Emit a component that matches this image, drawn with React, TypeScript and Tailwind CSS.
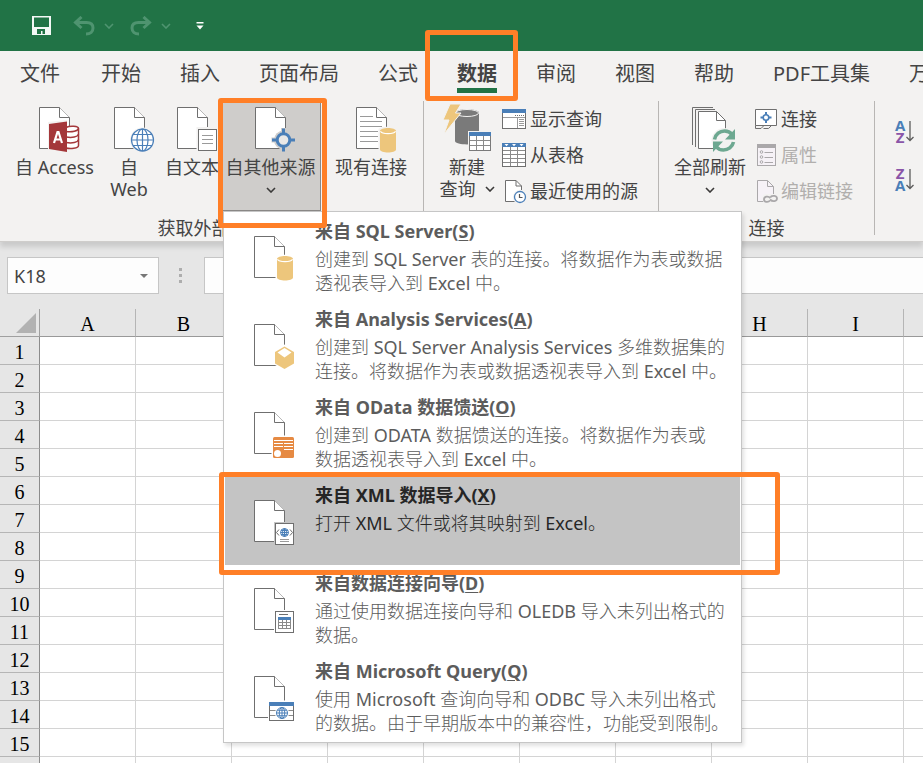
import { ReactNode } from "react";

const PAGE = "M.5 .5H20.5L30.5 10.5V41.5H.5Z";
const FOLD = "M20.5 .5V10.5H30.5";

function PageIcon({ children, lines = false }: { children?: ReactNode; lines?: boolean }) {
  return (
    <svg width="31" height="46" viewBox="0 0 31 46" className="shrink-0 overflow-visible" aria-hidden="true">
      <path d={PAGE} fill="#fff" stroke="#6f6f6f" />
      <path d={FOLD} fill="#fff" stroke="#6f6f6f" />
      {lines && <path d="M4 9.5H17M4 14.5H26M4 19.5H26M4 24.5H22M4 29.5H22M4 34.5H22" stroke="#9a9a9a" />}
      {children}
    </svg>
  );
}

function AccessBadge() {
  return (
    <>
      <path d="M9 15L28 13V19H42V43H28V47L9 44Z" fill="#f3f2f1" />
      <path d="M27 20.5C31 18.5 39.500 19 39.500 21.500V38.500C39.500 41.500 31 42 27 41" fill="#fff" stroke="#a4373a" strokeWidth="1.500" />
      <path d="M27 24.500C33 25.500 39 24 39.500 21.500M27 30C33 31 39 30 39.500 27M27 35.500C33 36.500 39 35.500 39.500 32.500" fill="none" stroke="#a4373a" strokeWidth="1.500" />
      <path d="M10 17L28 14.500V45L10 42Z" fill="#a4373a" />
      <path d="M15 36L18.500 25H19.500L23 36M16.500 32.500H21.500" fill="none" stroke="#fff" strokeWidth="2.200" />
    </>
  );
}

function Globe({ cx, cy, r, halo = "#f3f2f1", w = 1.2 }: { cx: number; cy: number; r: number; halo?: string; w?: number }) {
  const h = r * 0.5;
  const c = Math.sqrt(r * r - h * h);
  return (
    <>
      <circle cx={cx} cy={cy} r={r + 1.5} fill={halo} />
      <g fill="none" stroke="#4a7fb8" strokeWidth={w}>
        <circle cx={cx} cy={cy} r={r} fill="#fff" />
        <ellipse cx={cx} cy={cy} rx={r * 0.5} ry={r} />
        <path d={`M${cx - r} ${cy}H${cx + r}M${cx} ${cy - r}V${cy + r}M${cx - c} ${cy - h}H${cx + c}M${cx - c} ${cy + h}H${cx + c}`} />
      </g>
    </>
  );
}

function Cylinder({ x, y, halo }: { x: number; y: number; halo: string }) {
  return (
    <g transform={`translate(${x} ${y})`}>
      <path d="M-1.500 1C1 -2 15 -2 17.500 1V23C15 26.500 1 26.500 -1.500 23Z" fill={halo} />
      <path d="M0 3C0 -1 16 -1 16 3V21.500C16 25.500 0 25.500 0 21.500Z" fill="#edc67c" />
      <path d="M.5 3.200C2 6.400 14 6.400 15.500 3.200" fill="none" stroke="#fff" strokeWidth="1.200" />
    </g>
  );
}

function Chevron({ className = "text-[#3b3a39]" }: { className?: string }) {
  return (
    <svg width="10" height="6" viewBox="0 0 10 6" className={className} aria-hidden="true">
      <path d="M1 1L5 5L9 1" fill="none" stroke="currentColor" strokeWidth="1.600" />
    </svg>
  );
}

function Highlight({ className }: { className: string }) {
  return <span aria-hidden="true" className={`pointer-events-none absolute z-30 rounded-[3px] border-[5px] border-[#ff7f27] ${className}`} />;
}

function BigButton({ icon, lines, className, chevron }: { icon: ReactNode; lines: string[]; className: string; chevron?: "below" | "inline" }) {
  return (
    <button type="button" className={`flex h-[110px] shrink-0 flex-col items-center pt-[6px] text-[18px] leading-[22px] whitespace-nowrap ${className}`}>
      {icon}
      <span className="mt-[3px] flex flex-col items-center">
        {lines.map((line, i) => (
          <span key={line} className="flex items-center gap-[9px]">
            {line}
            {chevron === "inline" && i === lines.length - 1 && <Chevron />}
          </span>
        ))}
      </span>
      {chevron === "below" && (
        <span className="flex h-[24px] items-center">
          <Chevron />
        </span>
      )}
    </button>
  );
}

function SmallButton({ icon, label, disabled }: { icon: ReactNode; label: string; disabled?: boolean }) {
  return (
    <button type="button" disabled={disabled} className="flex h-9 items-center gap-1 text-[18px] leading-[22px] whitespace-nowrap disabled:text-[#b1afad]">
      {icon}
      {label}
    </button>
  );
}

function Group({ label, children, className = "" }: { label?: string; children: ReactNode; className?: string }) {
  return (
    <section className={`flex h-[134px] shrink-0 flex-col border-r border-[#b8b6b4] ${className}`}>
      <div className="flex h-[110px]">{children}</div>
      {label && <h2 className="mt-[6px] text-center text-[18px] leading-[22px]">{label}</h2>}
    </section>
  );
}

const menuItems = [
  {
    title: "来自 SQL Server", accessKey: "S",
    lines: ["创建到 SQL Server 表的连接。将数据作为表或数据", "透视表导入到 Excel 中。"],
    badge: <Cylinder x={23} y={20} halo="#fff" />,
  },
  {
    title: "来自 Analysis Services", accessKey: "A",
    lines: ["创建到 SQL Server Analysis Services 多维数据集的", "连接。将数据作为表或数据透视表导入到 Excel 中。"],
    badge: (
      <>
        <path d="M30.500 20.500L42 27V40L30.500 47L19.500 40V27Z" fill="#fff" />
        <path d="M30.500 22.500L40 28V39.500L30.500 45L21 39.500V28Z" fill="#edc67c" />
        <path d="M30.500 24L37.500 28.500L30.500 33.500L23.500 28.500Z" fill="#fff" />
      </>
    ),
  },
  {
    title: "来自 OData 数据馈送", accessKey: "O",
    lines: ["创建到 ODATA 数据馈送的连接。将数据作为表或", "数据透视表导入到 Excel 中。"],
    badge: (
      <>
        <rect x="17.500" y="23.500" width="24" height="24" fill="#fff" />
        <rect x="19" y="25" width="21" height="21" rx="1.500" fill="#e68a43" />
        <path d="M20 28.500H39M20 31.500H29M30 31.500H39M20 34.500H29M30 34.500H39M30 37.500H39" stroke="#fff" />
        <circle cx="23.500" cy="41.500" r="3.500" fill="#fff" />
      </>
    ),
  },
  {
    title: "来自 XML 数据导入", accessKey: "X", active: true,
    lines: ["打开 XML 文件或将其映射到 Excel。"],
    badge: (
      <>
        <rect x="20" y="22" width="21" height="24" fill="#c4c4c4" />
        <rect x="21.500" y="23.500" width="18" height="21" fill="#fff" stroke="#6f6f6f" />
        <Globe cx={30.5} cy={32.5} r={4} halo="#fff" w={1} />
        <path d="M25 29.500L22.500 32.500L25 35.500M36 29.500L38.500 32.500L36 35.500" fill="none" stroke="#6f6f6f" />
        <path d="M26 39.500H35M26 41.500H35" stroke="#9a9a9a" />
      </>
    ),
  },
  {
    title: "来自数据连接向导", accessKey: "D",
    lines: ["通过使用数据连接向导和 OLEDB 导入未列出格式的", "数据。"],
    badge: (
      <>
        <rect x="20" y="22" width="21" height="24" fill="#fff" />
        <rect x="21.500" y="23.500" width="18" height="21" fill="#fff" stroke="#6f6f6f" />
        <path d="M25 26.500H34" stroke="#6f6f6f" />
        <rect x="24.500" y="29.500" width="12" height="11" fill="none" stroke="#8a8a8a" />
        <path d="M24.500 34.500H36.500M24.500 37.500H36.500M28.500 30V40M32.500 30V40" stroke="#8a8a8a" />
        <rect x="24" y="29" width="13" height="3" fill="#4a7fb8" />
      </>
    ),
  },
  {
    title: "来自 Microsoft Query", accessKey: "Q",
    lines: ["使用 Microsoft 查询向导和 ODBC 导入未列出格式", "的数据。由于早期版本中的兼容性，功能受到限制。"],
    badge: (
      <>
        <rect x="14" y="24.500" width="27" height="22" fill="#fff" />
        <rect x="15.500" y="26.500" width="24" height="18" fill="#fff" stroke="#6f6f6f" />
        <rect x="15" y="26" width="25" height="4" fill="#4a7fb8" />
        <path d="M16 34.500H39M16 39.500H39" stroke="#8a8a8a" />
        <Globe cx={28} cy={37} r={5.5} halo="#fff" w={1} />
      </>
    ),
  },
];

function SourceMenu() {
  return (
    <ul role="menu" className="absolute top-[110px] left-0 z-20 w-[519px] border border-[#c6c6c6] bg-white p-px shadow-[2px_3px_4px_rgba(0,0,0,0.12)]">
      {menuItems.map((item) => (
        <li key={item.accessKey} role="none" className="relative">
          <button
            type="button"
            role="menuitem"
            className={`flex h-[88px] w-full items-start gap-[30px] pl-[29px] text-left text-[18px] leading-6 whitespace-nowrap ${item.active ? "bg-[#c4c4c4] text-[#262626]" : "text-[#5c5c5c]"}`}
          >
            <span className="pt-[23px]">
              <PageIcon>{item.badge}</PageIcon>
            </span>
            <span className="flex flex-col pt-[6px]">
              <span className="font-bold">
                {item.title}(<u className="underline-offset-2">{item.accessKey}</u>)
              </span>
              <span className="mt-1 font-['Noto_Sans','Noto_Sans_CJK_SC_Light','Noto_Sans_CJK_SC',sans-serif]">
                {item.lines.map((line) => (
                  <span key={line} className="block">{line}</span>
                ))}
              </span>
            </span>
          </button>
          {item.active && <Highlight className="-top-[5px] -right-[40px] -bottom-[10px] -left-[6px]" />}
        </li>
      ))}
    </ul>
  );
}

function QuickAccess() {
  return (
    <header className="flex h-[51px] shrink-0 items-center bg-[#217346] pl-8">
      <button type="button" aria-label="保存">
        <svg width="19" height="19" viewBox="0 0 19 19" className="block">
          <path d="M0 0H19V19H0Z" fill="#f3f8f5" />
          <path d="M2 1.500H17V11H2ZM5 13H13V18H10.500V15H9V18H5Z" fill="#217346" />
        </svg>
      </button>
      <button type="button" aria-label="撤消" disabled className="ml-[22px] flex items-center gap-[9px] text-[#4f9470]">
        <svg width="22" height="20" viewBox="0 0 22 20" fill="none" stroke="currentColor" strokeWidth="3">
          <path d="M8.500 1L2.500 6.500L8.500 12M3 6.500H13.500C18 6.500 20 9 20 12C20 15.500 17.500 18 13 18" />
        </svg>
        <Chevron className="text-[#4f9470]" />
      </button>
      <button type="button" aria-label="恢复" disabled className="ml-[16px] flex items-center gap-[9px] text-[#4f9470]">
        <svg width="22" height="20" viewBox="0 0 22 20" fill="none" stroke="currentColor" strokeWidth="3">
          <path d="M13.500 1L19.500 6.500L13.500 12M19 6.500H8.500C4 6.500 2 9 2 12C2 15.500 4.500 18 9 18" />
        </svg>
        <Chevron className="text-[#4f9470]" />
      </button>
      <button type="button" aria-label="自定义快速访问工具栏" className="ml-[25px]">
        <svg width="8" height="8" viewBox="0 0 8 8" className="block" fill="#fff">
          <path d="M.5 0H7.500V1.500H.5ZM.5 3.500H7.500L4 7.500Z" />
        </svg>
      </button>
    </header>
  );
}

const tabs = ["开始", "插入", "页面布局", "公式", "数据", "审阅", "视图", "帮助", "PDF工具集", "万彩办公"];

function Tabs() {
  const base = "relative shrink-0 border-b-[5px] pt-[8px] text-[20px] leading-[29px] whitespace-nowrap";
  return (
    <nav className="flex h-[50px] shrink-0 items-start bg-[#f3f2f1] pl-5">
      <button type="button" className={`${base} mr-[41px] border-transparent`}>文件</button>
      <div className="flex gap-[39px]">
        {tabs.map((tab) => (
          <button key={tab} type="button" className={`${base} ${tab === "数据" ? "border-[#217346] font-bold" : "border-transparent"}`}>
            {tab}
            {tab === "数据" && <Highlight className="-top-[21px] -right-[21px] -bottom-[13px] -left-[32px]" />}
          </button>
        ))}
      </div>
    </nav>
  );
}

function NewQueryIcon() {
  return (
    <svg width="48" height="46" viewBox="0 3 48 46" className="shrink-0 overflow-visible" aria-hidden="true">
      <path d="M12 9C12 4 36 4 36 9V37C36 41.500 12 41.500 12 37Z" fill="#7a7a7a" />
      <ellipse cx="24" cy="9" rx="11.500" ry="3.500" fill="#7a7a7a" stroke="#f3f2f1" />
      <path d="M7 0H18L12.500 9H18L1 30L6 16H0Z" fill="#edc67c" stroke="#f3f2f1" />
      <rect x="25" y="27" width="24" height="22" fill="#f3f2f1" />
      <rect x="26.500" y="29.500" width="21" height="17" fill="#fff" stroke="#7a7a7a" />
      <path d="M27 36.500H47M27 41.500H47M33.500 32V46M40.500 32V46" stroke="#8a8a8a" />
      <rect x="26" y="28" width="22" height="4" fill="#4a7fb8" />
    </svg>
  );
}

function ShowQueriesIcon() {
  return (
    <svg width="24" height="24" viewBox="0 0 24 24" aria-hidden="true">
      <rect x=".5" y="2.500" width="23" height="19" fill="#fff" stroke="#6f6f6f" />
      <rect width="24" height="4" y="2" fill="#4a7fb8" />
      <path d="M13 8.500H22" stroke="#6f6f6f" strokeDasharray="1 1" />
      <path d="M1 10.500H23M15.500 11V21" stroke="#9a9a9a" />
      <path d="M17 12.500H22M17 14.500H22M17 16.500H22M17 18.500H22" stroke="#9a9a9a" />
    </svg>
  );
}

function FromTableIcon() {
  return (
    <svg width="24" height="24" viewBox="0 0 24 24" aria-hidden="true">
      <rect x=".5" y=".5" width="23" height="23" fill="#fff" stroke="#6f6f6f" />
      <path d="M1 7.500H23M1 11.500H23M1 15.500H23M1 19.500H23M8.500 4V23M15.500 4V23" stroke="#8a8a8a" />
      <rect width="24" height="4" fill="#4a7fb8" />
      <path d="M2.500 1H6.500L4.500 3.200ZM10 1H14L12 3.200ZM17.500 1H21.500L19.500 3.200Z" fill="#fff" />
    </svg>
  );
}

function RecentIcon() {
  return (
    <svg width="24" height="24" viewBox="0 0 24 24" className="overflow-visible" aria-hidden="true">
      <path d="M3.500 1.500H14L19.500 7V22.500H3.500Z" fill="#fff" stroke="#6f6f6f" />
      <path d="M14 1.500V7H19.500" fill="none" stroke="#6f6f6f" />
      <circle cx="18" cy="18" r="7.200" fill="#f3f2f1" />
      <circle cx="18" cy="18" r="5.500" fill="#fff" stroke="#4a7fb8" strokeWidth="1.300" />
      <path d="M17.500 15V18.500H20.500" fill="none" stroke="#555" strokeWidth="1.200" />
    </svg>
  );
}

function RefreshIcon() {
  return (
    <svg width="37" height="46" viewBox="0 0 37 46" className="shrink-0 overflow-visible" aria-hidden="true">
      <path d="M.5 38V.5H21M3.500 40V2.500H23" fill="none" stroke="#6f6f6f" />
      <path d="M6.500 4.500H24.500L33.500 13.500V41.500H6.500Z" fill="#fff" stroke="#6f6f6f" />
      <path d="M24.500 4.500V13.500H33.500" fill="none" stroke="#6f6f6f" />
      <circle cx="32" cy="33.500" r="12.500" fill="#f3f2f1" />
      <path d="M22.500 32.500C23.500 27 28 24 32.500 24C36 24 38.500 25.500 40 27.500M41.500 35C40.500 40 36 43 31.500 43C28 43 25.500 41.500 24 39.500" fill="none" stroke="#6da891" strokeWidth="3.600" />
      <path d="M43 22V32.500H33ZM21 45V34.500H31Z" fill="#6da891" />
    </svg>
  );
}

function ConnectionsIcon() {
  return (
    <svg width="22" height="22" viewBox="0 0 22 22" aria-hidden="true">
      <path d="M.5 1.500H21.500V17.500H.5Z" fill="#fff" stroke="#6f6f6f" />
      <path d="M.5 17.500V20.500H6L9 17.500M8.500 20.500H13.500L16.500 17.500" fill="none" stroke="#6f6f6f" />
      <circle cx="11" cy="9.500" r="2.800" fill="#fff" stroke="#4a7fb8" strokeWidth="1.600" />
      <path d="M11 4V7M11 12V15M5.500 9.500H8M14 9.500H16.500" stroke="#4a7fb8" strokeWidth="2" />
    </svg>
  );
}

function PropertiesIcon() {
  return (
    <svg width="22" height="22" viewBox="0 0 22 22" aria-hidden="true">
      <rect x="2.500" y=".5" width="18" height="21" fill="#f6f2f7" stroke="#aaa8aa" />
      <rect x="2" y="0" width="19" height="4" fill="#aaa8aa" />
      <g fill="none" stroke="#aaa8aa">
        <circle cx="6.500" cy="8" r="1.300" /><circle cx="6.500" cy="13" r="1.300" /><circle cx="6.500" cy="18" r="1.300" />
        <path d="M9.500 8.500H18M9.500 13.500H18M9.500 18.500H18" />
      </g>
    </svg>
  );
}

function EditLinksIcon() {
  return (
    <svg width="22" height="24" viewBox="0 0 22 24" className="overflow-visible" aria-hidden="true">
      <path d="M2.500 1.500H12.500L18.500 7.500V22.500H2.500Z" fill="#f6f2f7" stroke="#aaa8aa" />
      <path d="M12.500 1.500V7.500H18.500" fill="none" stroke="#aaa8aa" />
      <rect x="7.500" y="15" width="16" height="9" rx="4" fill="#f3f2f1" />
      <g fill="none" stroke="#aaa8aa" strokeWidth="1.800">
        <path d="M15 21.500C13.500 23.500 9 23.500 9 20.500C9 17.500 13 16.500 15.500 19" />
        <path d="M15.500 18C17.500 16 22 16.500 22 19.500C22 22.500 17.500 23 15 20.500" />
      </g>
    </svg>
  );
}

function SortIcon({ letters }: { letters: [string, string] }) {
  return (
    <span className="flex h-6 items-center gap-px">
      <span className="flex flex-col items-center font-['Open_Sans','Noto_Sans',sans-serif] text-[15px] leading-[12px] font-bold">
        {letters.map((l) => (
          <span key={l} className={l === "A" ? "text-[#4a7fb8]" : "text-[#8a55a8]"}>{l}</span>
        ))}
      </span>
      <svg width="8" height="22" viewBox="0 0 8 22" fill="none" stroke="#5c5c5c" strokeWidth="1.300" aria-hidden="true">
        <path d="M4 1V20.500M.5 17L4 20.500L7.500 17" />
      </svg>
    </span>
  );
}

function Ribbon() {
  return (
    <div className="relative z-10 flex h-[141px] shrink-0 border-b border-[#cfcdcb] bg-[#f3f2f1] shadow-[0_5px_5px_rgba(0,0,0,0.12)]">
      <Group label="获取外部数据">
        <BigButton className="ml-[14px] w-[81px]" lines={["自 Access"]} icon={<PageIcon><AccessBadge /></PageIcon>} />
        <BigButton className="w-[68px]" lines={["自", "Web"]} icon={<PageIcon><Globe cx={28.5} cy={33} r={11} /></PageIcon>} />
        <BigButton
          className="w-[60px] pr-[2px]"
          lines={["自文本"]}
          icon={
            <PageIcon>
              <rect x="19.500" y="20" width="22" height="25" fill="#f3f2f1" />
              <rect x="21.500" y="22.500" width="18" height="21" fill="#fff" stroke="#6f6f6f" />
              <path d="M25 28.500H36M25 32.500H36M25 36.500H36" stroke="#9a9a9a" />
            </PageIcon>
          }
        />
        <div className="relative">
          <BigButton
            className="w-[98px] border-r border-b border-[#8a8886] bg-[#cfcdcb] pr-[2px]"
            lines={["自其他来源"]}
            chevron="below"
            icon={
              <PageIcon>
                <circle cx="28.500" cy="33" r="9.500" fill="#cfcdcb" />
                <path d="M28.500 21V27M28.500 39V45M16.500 33H22.500M34.500 33H40.500" stroke="#cfcdcb" strokeWidth="5" />
                <circle cx="28.500" cy="33" r="6.300" fill="#e9e8e7" stroke="#4a7fb8" strokeWidth="3" />
                <path d="M28.500 21.500V27M28.500 39V44.500M17 33H22.500M34.500 33H40" stroke="#4a7fb8" strokeWidth="3" />
              </PageIcon>
            }
          />
          <SourceMenu />
          <Highlight className="-top-[3px] -left-[5px] h-[130px] w-[109px]" />
        </div>
        <BigButton className="w-[102px] pr-[2px]" lines={["现有连接"]} icon={<PageIcon lines><Cylinder x={24} y={21} halo="#f3f2f1" /></PageIcon>} />
      </Group>
      <Group className="w-[235px] pl-1">
        <BigButton className="w-[74px] pl-1" lines={["新建", "查询"]} chevron="inline" icon={<NewQueryIcon />} />
        <div className="flex flex-col">
          <SmallButton icon={<ShowQueriesIcon />} label="显示查询" />
          <SmallButton icon={<FromTableIcon />} label="从表格" />
          <SmallButton icon={<RecentIcon />} label="最近使用的源" />
        </div>
      </Group>
      <Group label="连接" className="w-[216px]">
        <BigButton className="w-[96px] pl-[6px]" lines={["全部刷新"]} chevron="below" icon={<RefreshIcon />} />
        <div className="flex flex-col">
          <SmallButton icon={<ConnectionsIcon />} label="连接" />
          <SmallButton icon={<PropertiesIcon />} label="属性" disabled />
          <SmallButton icon={<EditLinksIcon />} label="编辑链接" disabled />
        </div>
      </Group>
      <section className="flex shrink-0 flex-col gap-6 pt-[18px] pl-5">
        <button type="button" aria-label="升序"><SortIcon letters={["A", "Z"]} /></button>
        <button type="button" aria-label="降序"><SortIcon letters={["Z", "A"]} /></button>
      </section>
    </div>
  );
}

function FormulaBar() {
  return (
    <div className="flex h-[67px] shrink-0 items-start bg-[#e6e6e6] pt-[15px] pl-[7px]">
      <div className="flex h-[37px] w-[152px] shrink-0 items-center border border-[#c6c6c6] bg-[#fdfdfd]">
        <input aria-label="名称框" defaultValue="K18" className="h-full w-[126px] bg-transparent pl-[6px] text-[18px] text-[#444]" />
        <button type="button" aria-label="打开名称列表" className="flex h-full w-[20px] items-center justify-center">
          <svg width="8" height="4" viewBox="0 0 8 4" fill="#777" aria-hidden="true"><path d="M0 0H8L4 4Z" /></svg>
        </button>
      </div>
      <div className="ml-5 flex h-[37px] w-[25px] shrink-0 flex-col justify-center gap-[3px]">
        <i className="size-[3px] bg-[#adadad]" />
        <i className="size-[3px] bg-[#adadad]" />
        <i className="size-[3px] bg-[#adadad]" />
      </div>
      <input aria-label="编辑栏" className="h-[37px] min-w-0 flex-1 border border-r-0 border-[#c6c6c6] bg-[#fdfdfd] px-2 text-[18px]" />
    </div>
  );
}

const columns = ["A", "B", "C", "D", "E", "F", "G", "H", "I", "J"];
const rows = Array.from({ length: 16 }, (_, i) => i + 1);

function Sheet() {
  return (
    <div className="min-h-0 flex-1 overflow-hidden bg-white">
      <table className="w-[1000px] table-fixed border-separate border-spacing-0 font-['Liberation_Serif','Noto_Sans_CJK_SC',serif] text-[20px] leading-[27px] text-black">
        <colgroup>
          <col className="w-[40px]" />
          {columns.map((c) => <col key={c} className="w-[96px]" />)}
        </colgroup>
        <thead>
          <tr className="h-7">
            <th aria-label="全选" className="border-r border-b border-[#a0a0a0] bg-[#e6e6e6] p-0">
              <svg width="20" height="20" viewBox="0 0 20 20" className="ml-4" fill="#b2b2b2" aria-hidden="true"><path d="M20 0V20H0Z" /></svg>
            </th>
            {columns.map((c) => (
              <th key={c} scope="col" className="border-r border-b border-r-[#b5b5b5] border-b-[#999] bg-[#e6e6e6] p-0 pt-1 leading-[23px] font-normal">{c}</th>
            ))}
          </tr>
        </thead>
        <tbody>
          {rows.map((r) => (
            <tr key={r} className="h-7">
              <th scope="row" className="border-r border-b border-r-[#8c8c8c] border-b-[#b5b5b5] bg-[#e6e6e6] p-0 pt-1 leading-[23px] font-normal">{r}</th>
              {columns.map((c) => (
                <td key={c} className="border-r border-b border-[#d4d4d4] p-0" />
              ))}
            </tr>
          ))}
        </tbody>
      </table>
    </div>
  );
}

export default function App() {
  return (
    <main className="flex h-screen flex-col overflow-hidden bg-[#e6e6e6] font-['Noto_Sans','Noto_Sans_CJK_SC',sans-serif] text-[#444]">
      <QuickAccess />
      <Tabs />
      <Ribbon />
      <FormulaBar />
      <Sheet />
    </main>
  );
}
